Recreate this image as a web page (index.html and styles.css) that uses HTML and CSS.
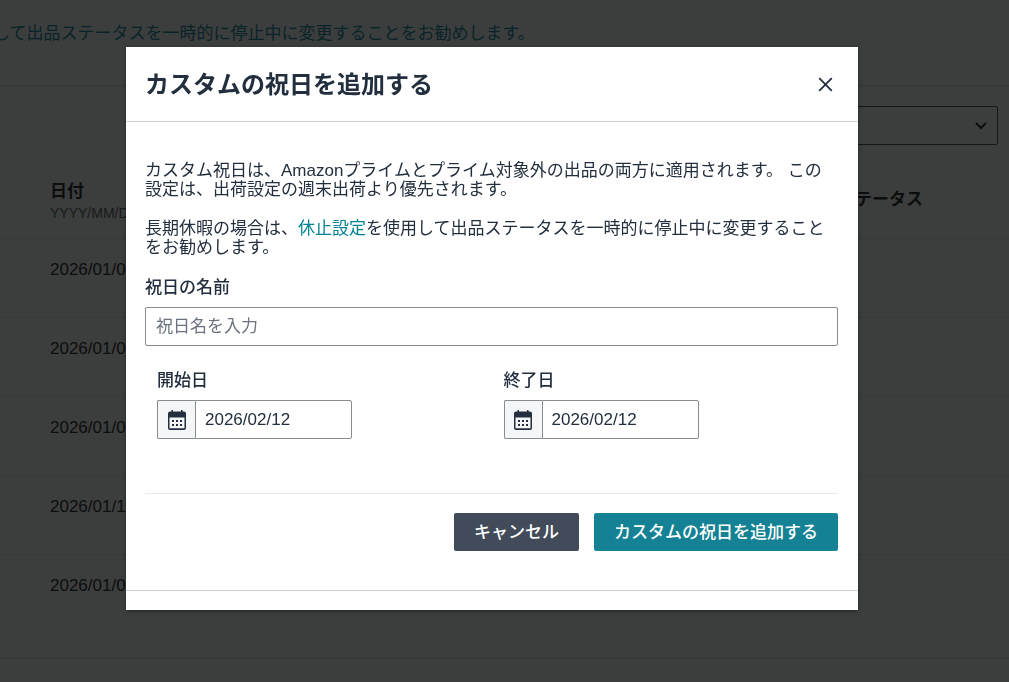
FILE: index.html
```html
<!DOCTYPE html>
<html lang="ja">
<head>
  <meta charset="utf-8">
  <title>カスタムの祝日を追加する</title>
  <meta name="viewport" content="width=device-width, initial-scale=1.0">
  <link rel="stylesheet" href="styles.css">
</head>
<body>
  <main class="page">
    <div class="notice">
      <a href="#" class="notice-link">して出品ステータスを一時的に停止中に変更することをお勧めします。</a>
    </div>

    <div class="toolbar">
      <div class="select-wrap">
        <select class="filter" aria-label="年">
          <option></option>
        </select>
        <svg class="chevron" width="12" height="8" viewBox="0 0 12 8"><path d="M1 1l5 5 5-5" fill="none" stroke="currentColor" stroke-width="2"/></svg>
      </div>
    </div>

    <table class="holidays">
      <thead>
        <tr>
          <th class="col-date">日付<span class="format">YYYY/MM/DD</span></th>
          <th class="col-status">ステータス</th>
        </tr>
      </thead>
      <tbody>
        <tr><td>2026/01/01</td><td></td></tr>
        <tr><td>2026/01/02</td><td></td></tr>
        <tr><td>2026/01/03</td><td></td></tr>
        <tr><td>2026/01/12</td><td></td></tr>
        <tr><td>2026/01/04</td><td></td></tr>
      </tbody>
    </table>
    <div class="page-end"></div>
  </main>

  <div class="overlay">
    <div class="modal" role="dialog" aria-modal="true" aria-labelledby="modal-title">
      <div class="modal-header">
        <h2 id="modal-title">カスタムの祝日を追加する</h2>
        <button type="button" class="close" aria-label="閉じる">
          <svg width="15" height="15" viewBox="0 0 15 15"><path d="M1.2 1.2l12.6 12.6M13.8 1.2L1.2 13.8" fill="none" stroke="currentColor" stroke-width="1.800"/></svg>
        </button>
      </div>

      <form class="modal-body">
        <p>カスタム祝日は、Amazonプライムとプライム対象外の出品の両方に適用されます。 この設定は、出荷設定の週末出荷より優先されます。</p>
        <p>長期休暇の場合は、<a href="#">休止設定</a>を使用して出品ステータスを一時的に停止中に変更することをお勧めします。</p>

        <label for="name">祝日の名前</label>
        <input type="text" id="name" class="name" placeholder="祝日名を入力">

        <div class="dates">
          <div class="date-field">
            <label for="start">開始日</label>
            <div class="date-group">
              <span class="date-icon">
                <svg width="20" height="20" viewBox="0 0 20 20"><path fill="currentColor" fill-rule="evenodd" d="M4.500 0h1.500v1.500h8V0h1.500v1.500h1.500a2 2 0 0 1 2 2V18a2 2 0 0 1-2 2H3a2 2 0 0 1-2-2V3.500a2 2 0 0 1 2-2h1.500zM2.500 7.500v10.800h15V7.500z"/><path fill="currentColor" d="M5 10h2v2H5zM9 10h2v2H9zM13 10h2v2h-2zM5 14h2v2H5zM9 14h2v2H9zM13 14h2v2h-2z"/></svg>
              </span>
              <input type="text" id="start" value="2026/02/12">
            </div>
          </div>
          <div class="date-field">
            <label for="end">終了日</label>
            <div class="date-group">
              <span class="date-icon">
                <svg width="20" height="20" viewBox="0 0 20 20"><path fill="currentColor" fill-rule="evenodd" d="M4.500 0h1.500v1.500h8V0h1.500v1.500h1.500a2 2 0 0 1 2 2V18a2 2 0 0 1-2 2H3a2 2 0 0 1-2-2V3.500a2 2 0 0 1 2-2h1.500zM2.500 7.500v10.800h15V7.500z"/><path fill="currentColor" d="M5 10h2v2H5zM9 10h2v2H9zM13 10h2v2h-2zM5 14h2v2H5zM9 14h2v2H9zM13 14h2v2h-2z"/></svg>
              </span>
              <input type="text" id="end" value="2026/02/12">
            </div>
          </div>
        </div>

        <div class="actions">
          <button type="button" class="button">キャンセル</button>
          <button type="submit" class="button primary">カスタムの祝日を追加する</button>
        </div>
      </form>
      <div class="modal-footer"></div>
    </div>
  </div>
</body>
</html>
```

FILE: styles.css
```css
* {
  box-sizing: border-box;
}

body {
  font-family: "Liberation Sans", "Noto Sans CJK JP", sans-serif;
  font-size: 17px;
  line-height: 19px;
  color: #232f3e;
  background-color: #fff;
  margin: 0;
}

input,
select,
button {
  font: inherit;
  color: inherit;
}

a {
  color: #008296;
  text-decoration: none;
}

/* Page behind the dialog */
.page {
  height: 100vh;
  overflow: hidden;
  color: #0f1111;
}

.notice {
  height: 86px;
  padding-top: 24px;
  border-bottom: 1px solid #d5dbdb;
  white-space: nowrap;
}

.notice-link {
  margin-left: -7px;
}

.toolbar {
  display: flex;
  justify-content: flex-end;
  padding: 20px 11px 0 0;
}

.select-wrap {
  position: relative;
  width: 300px;
}

.filter {
  display: block;
  width: 100%;
  height: 39px;
  appearance: none;
  background: none;
  border: 1px solid #3c4445;
  border-radius: 2px;
}

.chevron {
  position: absolute;
  right: 11px;
  top: 16px;
}

.holidays {
  width: 100%;
  border-collapse: collapse;
  table-layout: fixed;
}

.holidays th {
  height: 93px;
  padding: 16px 0 0;
  text-align: left;
  border-bottom: 1px solid #e7eaea;
}

.holidays .col-date {
  padding: 22px 0 0 50px;
}

.col-status {
  width: 171px;
}

.format {
  display: block;
  margin-top: 3px;
  font-size: 14px;
  font-weight: normal;
  color: #4c5556;
}

.holidays td {
  height: 79px;
  padding: 21px 0 0 50px;
  vertical-align: top;
  border-bottom: 1px solid #e7eaea;
}

.holidays tbody tr:last-child td {
  border-bottom: none;
}

.page-end {
  margin-top: 25px;
  border-top: 1px solid #d5dbdb;
}

/* Dialog */
.overlay {
  position: fixed;
  inset: 0;
  display: flex;
  align-items: center;
  justify-content: center;
  padding: 0 25px 25px 0;
  background-color: rgba(11, 12, 13, 0.8);
}

.modal {
  width: 100%;
  max-width: 732px;
  background-color: #fff;
  box-shadow: 0 1px 4px rgba(0, 0, 0, 0.4);
}

.modal-header {
  display: flex;
  align-items: center;
  justify-content: space-between;
  padding: 20px 25px 20px 19px;
  border-bottom: 1px solid #d0d3d4;
}

.modal-header h2 {
  margin: 0;
  padding-top: 2px;
  font-size: 24px;
  line-height: 32px;
}

.close {
  display: flex;
  padding: 0;
  border: none;
  background: none;
  cursor: pointer;
}

.modal-body {
  padding: 39px 20px 39px 19px;
}

.modal-body p {
  margin: 0 0 20px;
}

.modal-body label {
  display: block;
  padding-top: 1px;
  margin-bottom: 10px;
  font-weight: 500;
}

.modal-body input {
  width: 100%;
  height: 39px;
  padding: 0 10px;
  border: 1px solid #888c8f;
  border-radius: 2px;
  background-color: #fff;
}

.name::placeholder {
  color: #6b7280;
  opacity: 1;
}

.dates {
  display: grid;
  grid-template-columns: 1fr 1fr;
  margin-top: 24px;
}

.date-field {
  padding-left: 12px;
}

.date-group {
  display: flex;
  width: 195px;
}

.date-icon {
  display: flex;
  flex: none;
  align-items: center;
  justify-content: center;
  width: 38px;
  border: 1px solid #888c8f;
  border-right: none;
  border-radius: 2px 0 0 2px;
  background-color: #f5f6f7;
}

.modal-body .date-group input {
  padding: 0 9px;
  border-radius: 0 2px 2px 0;
}

.actions {
  display: flex;
  justify-content: flex-end;
  gap: 15px;
  margin-top: 54px;
  padding-top: 19px;
  border-top: 1px solid #e7e9ea;
}

.button {
  height: 38px;
  padding: 0 20px;
  border: none;
  border-radius: 2px;
  background-color: #414b5a;
  color: #fff;
  font-weight: 500;
  cursor: pointer;
}

.button.primary {
  background-color: #148294;
}

.modal-footer {
  height: 20px;
  border-top: 1px solid #d0d3d4;
}
```
